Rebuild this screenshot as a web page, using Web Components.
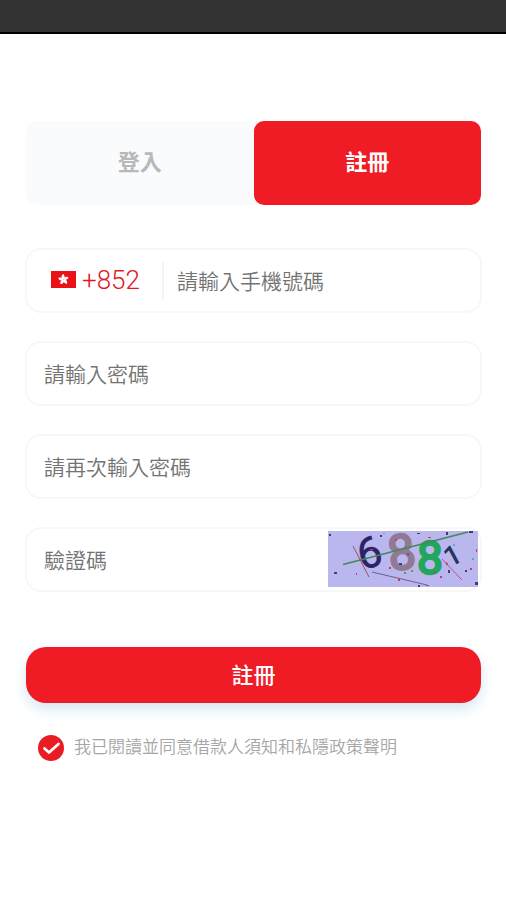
<!DOCTYPE html>
<html lang="zh-Hant">
<head>
<meta charset="utf-8">
<meta name="viewport" content="width=device-width, initial-scale=1">
<title>註冊</title>
<style>
  body { margin: 0; background: #fff; font-family: Roboto, "Noto Sans CJK TC", sans-serif; }
</style>
</head>
<body>
<register-page></register-page>

<template id="t-page">
  <style>
    :host { display: block; }
    header { height: 32px; background: #333; border-bottom: 2px solid #000; }
    main { padding: 87px 24px 40px 25px; }
    form { display: flex; flex-direction: column; gap: 28px; margin-top: 43px; }
    submit-button { margin-top: 27px; }
    agree-check { margin: 2px 0 0 13px; }
  </style>
  <header></header>
  <main>
    <tab-switch></tab-switch>
    <form>
      <text-field type="tel" placeholder="請輸入手機號碼"><country-code slot="before">+852</country-code></text-field>
      <text-field type="password" placeholder="請輸入密碼"></text-field>
      <text-field type="password" placeholder="請再次輸入密碼"></text-field>
      <text-field type="text" placeholder="驗證碼"><captcha-image slot="after"></captcha-image></text-field>
      <submit-button>註冊</submit-button>
      <agree-check>我已閱讀並同意借款人須知和私隱政策聲明</agree-check>
    </form>
  </main>
</template>

<template id="t-tabs">
  <style>
    :host { display: block; padding: 0 1px; }
    div { display: grid; grid-template-columns: 1fr 1fr; background: #f9fbfd; border-radius: 10px; }
    button { height: 84px; border: 0; border-radius: 10px; padding: 0; background: none; color: #b8b8b8; font: bold 22px/32px Roboto, "Noto Sans CJK TC", sans-serif; }
    button[aria-selected="true"] { background: #ef1c25; color: #fff; }
  </style>
  <div role="tablist">
    <button type="button" role="tab" aria-selected="false">登入</button>
    <button type="button" role="tab" aria-selected="true">註冊</button>
  </div>
</template>

<template id="t-field">
  <style>
    :host { display: block; }
    .box { display: flex; align-items: center; height: 65px; box-sizing: border-box; border: 2px solid #f7f7f7; border-radius: 16px; background: #fff; }
    input { flex: 1; min-width: 0; height: 40px; border: 0; outline: 0; padding: 2px 0 0 17px; background: none; color: #333; font: 350 21px/32px Roboto, "Noto Sans CJK TC", sans-serif; }
    ::slotted([slot="before"]) { margin-right: -4px; }
    input::placeholder { color: #737373; opacity: 1; }
  </style>
  <div class="box">
    <slot name="before"></slot>
    <input id="field">
    <slot name="after"></slot>
  </div>
</template>

<template id="t-code">
  <style>
    :host { display: block; }
    button { display: flex; align-items: center; gap: 6px; height: 38px; width: 137px; box-sizing: border-box; border: 0; border-right: 2px solid #f5f5f5; padding: 0 0 2px 24px; background: none; color: #e2171f; font: 350 26px/32px Roboto, sans-serif; }
    svg { display: block; flex: none; }
  </style>
  <button type="button" aria-label="+852">
    <svg width="25" height="17" viewBox="0 0 25 17" aria-hidden="true">
      <rect width="25" height="17" fill="#ea1119"/>
      <g fill="#fff" transform="translate(12.5 8.5)">
        <path id="petal" d="M0 0C-2.7-1.2-2.5-4.8.3-5.4C0-4.2 2.6-3.2 0 0Z"/>
        <use href="#petal" transform="rotate(72)"/><use href="#petal" transform="rotate(144)"/>
        <use href="#petal" transform="rotate(216)"/><use href="#petal" transform="rotate(288)"/>
      </g>
    </svg>
    <span><slot></slot></span>
  </button>
</template>

<template id="t-captcha">
  <style>
    :host { display: block; margin: -1px 2px 0 0; }
    button { display: block; padding: 0; border: 0; background: none; }
    svg { display: block; overflow: visible; }
    text { font-family: Roboto, sans-serif; }
  </style>
  <button type="button" aria-label="更換驗證碼">
    <svg width="150" height="56" viewBox="0 0 150 56">
      <rect width="150" height="56" fill="#b9b7ed"/>
      <g text-anchor="middle">
        <text transform="translate(45 36) rotate(-14)" font-size="43" fill="#2b2365" stroke="#2b2365" stroke-width=".6">6</text>
        <text transform="translate(76 38) rotate(-8)" font-size="49" fill="#927a94" stroke="#927a94" stroke-width="2.4">8</text>
        <text transform="translate(102 43)" font-size="46" fill="#20a65d" stroke="#20a65d" stroke-width="2.4">8</text>
        <text transform="translate(129 33) rotate(-28)" font-size="28" font-weight="500" fill="#26355e">1</text>
      </g>
      <g fill="none">
        <path d="M15 33.500L140 1" stroke="#45865a" stroke-width="1.6"/>
        <path d="M25 15L41 46" stroke="#8b5875" stroke-width="1"/>
        <path d="M44 41L99 54" stroke="#735d91" stroke-width="1"/>
        <path d="M114 28L134 49" stroke="#bd4d98" stroke-width="1"/>
      </g>
      <g fill="#443a75">
        <path d="M1 3h2v2H1zM6 41h3v2H6zM52 4h2v2h-2zM89 2h3v1h-3zM118 1h2v3h-2zM141 0h4v2h-4zM120 39h2v3h-2zM147 51h3v3h-3zM90 54h2v2h-2zM137 39h2v2h-2zM71 32h3v2h-3z"/>
      </g>
      <g fill="#c83d59"><path d="M67 8h2v2h-2zM42 18h3v1h-3zM117 31l3 1-1 3zM100 6h3v1h-3zM61 36h2v2h-2zM70 48h2v2h-2zM106 40h2v2h-2zM148 18h1v3h-1z"/></g>
      <path d="M79 22l2 1-1 2z" fill="#342dd0"/>
      <path d="M144 27h2v2h-2zM55 2h2v1h-2zM125 13h2v2h-2z" fill="#5ba9ba"/>
      <path d="M28 42h1v2h-1zM98 54h3v1h-3zM112 45h2v2h-2zM142 37h2v2h-2z" fill="#b03aae"/>
      <path d="M76 41h2v2h-2zM83 39h2v2h-2z" fill="#659b45"/>
    </svg>
  </button>
</template>

<template id="t-submit">
  <style>
    :host { display: block; padding: 0 1px; }
    button { display: block; width: 100%; height: 56px; border: 0; border-radius: 20px; padding: 2px 0 0; background: #ef1c25; color: #fff; font: 500 22px/32px Roboto, "Noto Sans CJK TC", sans-serif; box-shadow: 0 6px 14px #d5e7f3; }
  </style>
  <button type="button"><slot></slot></button>
</template>

<template id="t-agree">
  <style>
    :host { display: block; }
    label { display: flex; align-items: center; gap: 10px; color: #a6a6a6; font-weight: 350; font-size: 17px; line-height: 28px; }
    .tick { display: grid; flex: none; width: 26px; height: 28px; align-items: center; }
    input, svg { grid-area: 1 / 1; }
    input { appearance: none; width: 26px; height: 26px; margin: 0; border-radius: 50%; border: 1px solid #ccc; }
    input:checked { background: #e91b23; border: 0; }
    svg { pointer-events: none; z-index: 1; visibility: hidden; }
    input:checked + svg { visibility: visible; }
    .words { padding-bottom: 1px; }
  </style>
  <label for="agree">
    <span class="tick">
      <input id="agree" type="checkbox" checked>
      <svg width="26" height="26" viewBox="0 0 26 26" aria-hidden="true"><path d="M6.500 13.500L11 17.500L20.500 9" fill="none" stroke="#fff" stroke-width="2.800" stroke-linecap="round" stroke-linejoin="round"/></svg>
    </span>
    <span class="words"><slot></slot></span>
  </label>
</template>

<script>
  class BaseElement extends HTMLElement {
    constructor() {
      super();
      this.attachShadow({ mode: "open" })
        .append(document.getElementById(this.constructor.template).content.cloneNode(true));
    }
  }
  class TextField extends BaseElement {
    static template = "t-field";
    connectedCallback() {
      const input = this.shadowRoot.querySelector("input");
      input.type = this.getAttribute("type") || "text";
      input.placeholder = this.getAttribute("placeholder") || "";
      input.setAttribute("aria-label", input.placeholder);
    }
  }
  class TabSwitch extends BaseElement {
    static template = "t-tabs";
    connectedCallback() {
      const tabs = [...this.shadowRoot.querySelectorAll("button")];
      tabs.forEach(tab => tab.onclick = () =>
        tabs.forEach(t => t.setAttribute("aria-selected", String(t === tab))));
    }
  }
  customElements.define("tab-switch", TabSwitch);
  customElements.define("text-field", TextField);
  customElements.define("country-code", class extends BaseElement { static template = "t-code"; });
  customElements.define("captcha-image", class extends BaseElement { static template = "t-captcha"; });
  customElements.define("submit-button", class extends BaseElement { static template = "t-submit"; });
  customElements.define("agree-check", class extends BaseElement { static template = "t-agree"; });
  customElements.define("register-page", class extends BaseElement { static template = "t-page"; });
</script>
</body>
</html>
